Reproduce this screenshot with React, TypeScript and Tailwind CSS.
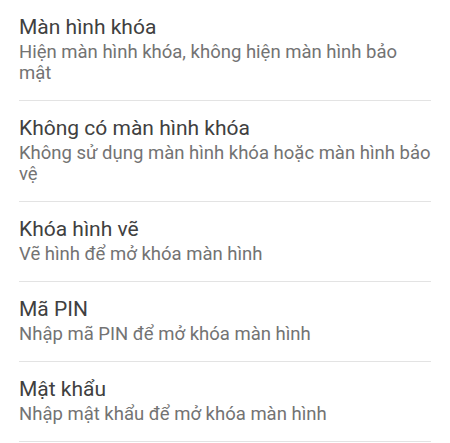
import React from 'react';

const items = [
  { title: 'Màn hình khóa', desc: 'Hiện màn hình khóa, không hiện màn hình bảo mật' },
  { title: 'Không có màn hình khóa', desc: 'Không sử dụng màn hình khóa hoặc màn hình bảo vệ' },
  { title: 'Khóa hình vẽ', desc: 'Vẽ hình để mở khóa màn hình' },
  { title: 'Mã PIN', desc: 'Nhập mã PIN để mở khóa màn hình' },
  { title: 'Mật khẩu', desc: 'Nhập mật khẩu để mở khóa màn hình' },
];

const App: React.FC = () => {
  return (
    <div className="w-[450px] h-[443px] bg-white overflow-hidden font-['Roboto',sans-serif]">
      <div className="mx-[19px]">
        {items.map(({ title, desc }, index) => (
          <div key={index} className="pt-[15px] pb-[16px] border-b border-[#e3e3e3]">
            <div className="text-[21px] leading-[25px] text-[#404040]">{title}</div>
            <div className="mt-[2px] text-[18.5px] leading-[21px] text-[#737373]">{desc}</div>
          </div>
        ))}
      </div>
    </div>
  );
};

export default App;
